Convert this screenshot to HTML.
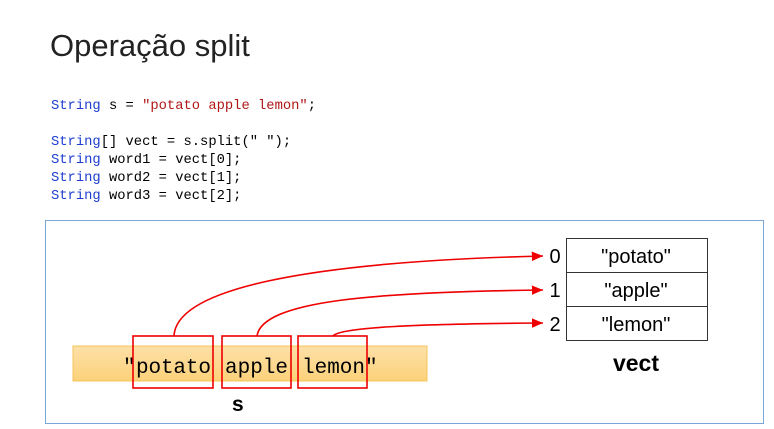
<!DOCTYPE html>
<html><head><style>
body{margin:0;width:774px;height:429px;background:#fff;position:relative;overflow:hidden;font-family:"Liberation Sans",sans-serif}
.t{position:absolute;left:50px;top:28px;font-size:31px;color:#222}
pre{position:absolute;left:51px;top:98px;margin:0;font-family:"Liberation Mono",monospace;font-size:13.8px;line-height:18px;color:#000}
.k{color:#1f3fd0}.s{color:#b01818}
</style></head><body>
<div class="t">Operação split</div>
<pre><span class="k">String</span> s = <span class="s">"potato apple lemon"</span>;

<span class="k">String</span>[] vect = s.split(" ");
<span class="k">String</span> word1 = vect[0];
<span class="k">String</span> word2 = vect[1];
<span class="k">String</span> word3 = vect[2];</pre>
<svg width="774" height="429" style="position:absolute;left:0;top:0">
<defs><linearGradient id="g" x1="0" y1="0" x2="0" y2="1"><stop offset="0" stop-color="#fde0a8"/><stop offset="1" stop-color="#fcd27a"/></linearGradient>
<marker id="a" markerWidth="8" markerHeight="8" refX="7" refY="4" orient="auto"><path d="M0,1 L7,4 L0,7 Z" fill="#e00"/></marker></defs>
<rect x="45.5" y="220.5" width="718" height="203" fill="none" stroke="#7aa7d8"/>
<rect x="73" y="346" width="354" height="35" fill="url(#g)" stroke="#f5c45a"/>
<g font-family="Liberation Mono,monospace" font-size="21" fill="#000">
<text x="123" y="373">"</text>
<text x="136" y="373" textLength="75">potato</text>
<text x="225" y="373" textLength="63">apple</text>
<text x="302" y="373" textLength="63">lemon</text>
<text x="365" y="373">"</text></g>
<g fill="none" stroke="#e00" stroke-width="1.6">
<rect x="133" y="336" width="80" height="52"/><rect x="222" y="336" width="69" height="52"/><rect x="298" y="336" width="69" height="52"/>
<path d="M174,336 C176,290 300,262 543,256" marker-end="url(#a)"/>
<path d="M257,336 C262,300 380,292 543,290" marker-end="url(#a)"/>
<path d="M333,336 C340,327 420,324 543,323" marker-end="url(#a)"/>
</g>
<text x="232" y="411" font-size="21" font-weight="bold">s</text>
<g fill="none" stroke="#333"><rect x="566.5" y="238.5" width="141" height="34"/><rect x="566.5" y="272.5" width="141" height="34"/><rect x="566.5" y="306.5" width="141" height="34"/></g>
<g font-size="20" text-anchor="middle" fill="#000">
<text x="636" y="263">"potato"</text><text x="636" y="297">"apple"</text><text x="636" y="331">"lemon"</text>
<text x="555" y="263">0</text><text x="555" y="297">1</text><text x="555" y="331">2</text>
<text x="636" y="371" font-weight="bold" font-size="23">vect</text></g>
</svg>
</body></html>
